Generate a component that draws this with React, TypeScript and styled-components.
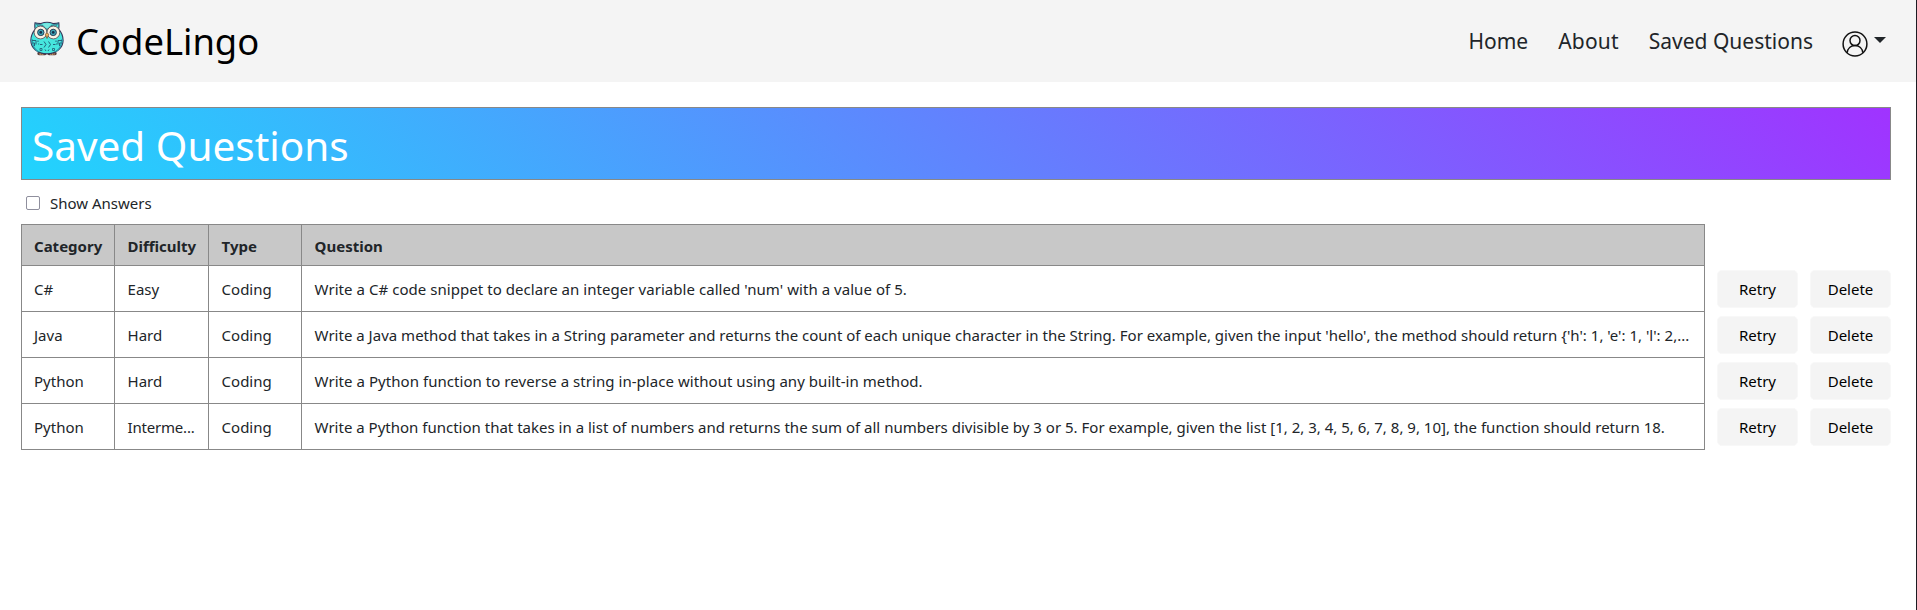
import React, { useState } from 'react';
import styled, { createGlobalStyle } from 'styled-components';

const GlobalStyle = createGlobalStyle`
  *, *::before, *::after { box-sizing: border-box; }
  body {
    margin: 0;
    background: #fff;
    color: #212529;
    font-family: "Noto Sans", "Open Sans", sans-serif;
    font-size: 15px;
    line-height: 20px;
  }
`;

const Page = styled.div`
  min-height: 610px;
  border-right: 1px solid #1c1b22;
`;

const Header = styled.header`
  display: flex;
  align-items: center;
  justify-content: space-between;
  height: 82px;
  padding: 0 30px 0 29px;
  background: #f4f4f4;
`;

const Brand = styled.a`
  display: flex;
  align-items: center;
  gap: 11px;
  color: #000;
  font-size: 36.4px;
  line-height: 50px;

  svg { margin-bottom: 4px; }
`;

const Nav = styled.nav`
  display: flex;
  align-items: center;
  gap: 30px;
`;

const NavLink = styled.a`
  font-size: 21px;
  line-height: 30px;
  white-space: nowrap;
`;

const NavAbout = styled(NavLink)`
  letter-spacing: 0.2px;
`;

const UserMenu = styled.button`
  display: flex;
  align-items: center;
  gap: 6px;
  margin-left: -1px;
  padding: 0;
  border: 0;
  background: none;
`;

const UserGlyph = styled.svg`
  display: block;
  margin-top: 5px;
`;

const Caret = styled.span`
  border-top: 6px solid #212529;
  border-left: 6px solid transparent;
  border-right: 6px solid transparent;
  margin-bottom: 2px;
`;

const Main = styled.main`
  padding: 25px 25px 0 21px;
`;

const Banner = styled.h1`
  display: flex;
  align-items: center;
  height: 73px;
  margin: 0;
  padding: 5px 0 0 10px;
  border: 1px solid #888;
  background: linear-gradient(45deg, #21d4fd 0%, #a033ff 100%);
  color: #fff;
  font-size: 40.5px;
  font-weight: 400;
  line-height: 56px;
`;

const Toggle = styled.label`
  display: flex;
  align-items: center;
  gap: 10px;
  height: 44px;
  padding: 2px 0 0 5px;
`;

const Checkbox = styled.input`
  appearance: none;
  width: 14px;
  height: 14px;
  margin: 0;
  border: 1px solid #8f8f9d;
  border-radius: 2px;
  background: #fff;

  &:checked { background: #0060df; }
`;

const Row = styled.div`
  display: flex;
  align-items: flex-start;
  gap: 12px;
`;

const Cells = styled.div<{ $head?: boolean }>`
  display: grid;
  grid-template-columns: 93px 94px 93px 1fr;
  width: 1684px;
  height: ${(p) => (p.$head ? '42px' : '46px')};
  border: 1px solid #888;
  border-top-width: ${(p) => (p.$head ? '1px' : '0')};
  background: ${(p) => (p.$head ? '#c8c8c8' : '#fff')};
  font-weight: ${(p) => (p.$head ? 700 : 400)};
`;

const Cell = styled.div<{ $tracking?: number }>`
  display: flex;
  align-items: center;
  min-width: 0;
  padding: 1px 0 0 12.600px;
  overflow: hidden;
  white-space: nowrap;
  letter-spacing: ${(p) => p.$tracking ?? 0}px;

  &:first-child { padding-left: 12px; }
  &:not(:last-child) { border-right: 1px solid #888; }
`;

const HeadCell = styled(Cell)`
  padding-top: 2px;
`;

const Actions = styled.div`
  display: flex;
  gap: 12px;
  padding-top: 4px;
`;

const ActionButton = styled.button`
  width: 81px;
  height: 38px;
  padding: 0 0 1px;
  border: 1px solid #f8f8f8;
  border-radius: 5px;
  background: #f4f4f4;
  color: #000;
  font: inherit;
`;

const OwlLogo = () => (
  <svg width="36" height="36" viewBox="0 0 36 36" fill="none">
    <path d="M10 32.5h6M20 32.5h6" stroke="#5a3c3c" strokeWidth="3.4" strokeLinecap="round" />
    <path d="M10.5 33h4.5M21 33h4.5" stroke="#e0a868" strokeWidth="1.5" strokeDasharray="1.4 .6" />
    <path
      d="M6 1.8C8 2.2 10 2.4 12 2.6 15.5 1 20.5 1 24 2.6c2-.2 4-.4 5.800-.8.3 2.800.2 4.800-.2 6.400 2.900 3 4.500 6.400 4.500 11.300 0 7-6.500 13.300-16.200 13.300S1.800 26.500 1.800 19.500c0-4.900 2-8.300 4.400-11.300C5.700 6.600 5.700 4.600 6 1.800Z"
      fill="#46e6de"
      stroke="#35365a"
      strokeWidth="1.1"
    />
    <path d="M3 18c.2 6 1.700 10 6.500 13M33 18c-.2 6-1.700 10-6.500 13" stroke="#2b9fb0" strokeWidth="1.300" />
    <path d="M7 2.700 14 4.500 18 9l4-4.500 6.800-1.800-2.300 2.800-5 2H14.500l-5-2Z" fill="#45b5ba" stroke="#33415e" strokeWidth=".5" />
    <path d="M13.500 2.900C16 2 20 2 22.500 2.900L18 8Z" fill="#7be8e0" />
    <circle cx="11.500" cy="11.500" r="6.400" fill="#fbf3e4" stroke="#53464f" strokeWidth=".8" />
    <circle cx="24.400" cy="11.500" r="6.400" fill="#fbf3e4" stroke="#53464f" strokeWidth=".8" />
    <circle cx="11.800" cy="11.400" r="3.200" fill="#3fa9ba" stroke="#284058" strokeWidth="1" />
    <circle cx="24.200" cy="11.400" r="3.200" fill="#3fa9ba" stroke="#284058" strokeWidth="1" />
    <circle cx="11.800" cy="11.400" r="1.400" fill="#152d48" />
    <circle cx="24.200" cy="11.400" r="1.400" fill="#152d48" />
    <path d="M16.200 13.200 18 11.800l1.800 1.400L18 17.500Z" fill="#f2b55c" stroke="#6b4938" strokeWidth=".7" />
    <path
      d="m15 20.500 2 3-2 3M19.500 20.500l2 3-2 3M11 23.500h2.500M24 23.500h2.500M3 19.500h4v4M33 19.500h-4v4M3.500 22h2v3M32.500 22h-2v3M9 19.500v1.500M27 19.500v1.500M16 28.500l1 1.500M20 28.500l-1 1.500"
      stroke="#24657c"
      strokeWidth="1"
    />
    <path d="M11 27.500h2v2h-2zM23.500 27.500h2v2h-2zM9 23h1.200M27 23h1.200" stroke="#24657c" strokeWidth=".9" />
  </svg>
);

const UserIcon = () => (
  <UserGlyph width="26" height="26" viewBox="0 0 26 26" fill="none" stroke="#111" strokeWidth="1.500">
    <circle cx="13" cy="13" r="11.900" />
    <circle cx="13" cy="9.600" r="5" />
    <path d="M5.200 21.800c.4-4.300 3.600-7.200 7.800-7.200s7.400 2.900 7.800 7.200" />
  </UserGlyph>
);

const questions = [
  {
    category: 'C#',
    difficulty: 'Easy',
    type: 'Coding',
    text: "Write a C# code snippet to declare an integer variable called 'num' with a value of 5.",
    tracking: 0.05,
  },
  {
    category: 'Java',
    difficulty: 'Hard',
    type: 'Coding',
    text: "Write a Java method that takes in a String parameter and returns the count of each unique character in the String. For example, given the input 'hello', the method should return {'h': 1, 'e': 1, 'l': 2,...",
    tracking: 0.008,
  },
  {
    category: 'Python',
    difficulty: 'Hard',
    type: 'Coding',
    text: 'Write a Python function to reverse a string in-place without using any built-in method.',
    tracking: 0.05,
  },
  {
    category: 'Python',
    difficulty: 'Interme...',
    type: 'Coding',
    text: 'Write a Python function that takes in a list of numbers and returns the sum of all numbers divisible by 3 or 5. For example, given the list [1, 2, 3, 4, 5, 6, 7, 8, 9, 10], the function should return 18.',
    tracking: 0.005,
  },
];

export default function App() {
  const [showAnswers, setShowAnswers] = useState(false);

  return (
    <>
      <GlobalStyle />
      <Page>
        <Header>
          <Brand>
            <OwlLogo />
            CodeLingo
          </Brand>
          <Nav>
            <NavLink>Home</NavLink>
            <NavAbout>About</NavAbout>
            <NavLink>Saved Questions</NavLink>
            <UserMenu aria-label="Account">
              <UserIcon />
              <Caret />
            </UserMenu>
          </Nav>
        </Header>
        <Main>
          <Banner>Saved Questions</Banner>
          <Toggle>
            <Checkbox
              type="checkbox"
              checked={showAnswers}
              onChange={(e) => setShowAnswers(e.target.checked)}
            />
            Show Answers
          </Toggle>
          <Row>
            <Cells $head>
              <HeadCell>Category</HeadCell>
              <HeadCell>Difficulty</HeadCell>
              <HeadCell>Type</HeadCell>
              <HeadCell>Question</HeadCell>
            </Cells>
          </Row>
          {questions.map((q) => (
            <Row key={q.text}>
              <Cells>
                <Cell>{q.category}</Cell>
                <Cell $tracking={q.difficulty.length > 6 ? -0.2 : 0}>{q.difficulty}</Cell>
                <Cell>{q.type}</Cell>
                <Cell $tracking={q.tracking}>{q.text}</Cell>
              </Cells>
              <Actions>
                <ActionButton>Retry</ActionButton>
                <ActionButton>Delete</ActionButton>
              </Actions>
            </Row>
          ))}
        </Main>
      </Page>
    </>
  );
}
